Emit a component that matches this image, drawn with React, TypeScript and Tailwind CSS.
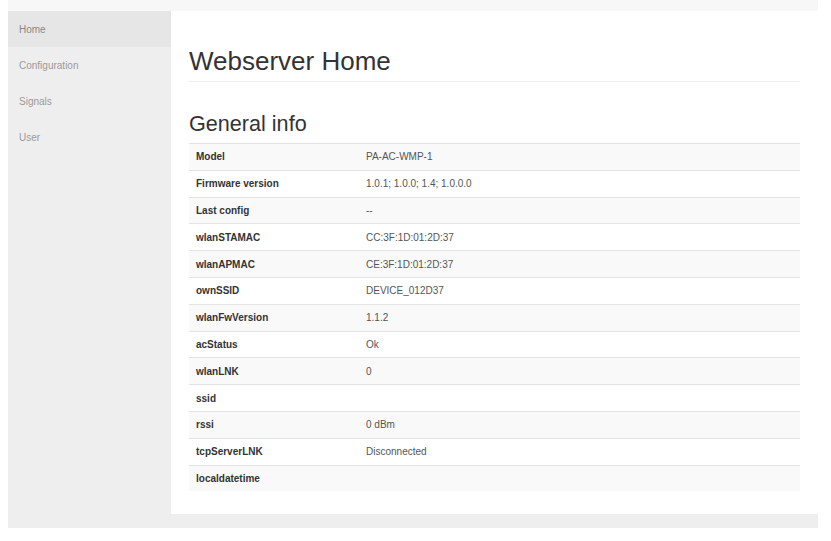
import React from "react";

const rows: [string, string][] = [
  ["Model", "PA-AC-WMP-1"],
  ["Firmware version", "1.0.1; 1.0.0; 1.4; 1.0.0.0"],
  ["Last config", "--"],
  ["wlanSTAMAC", "CC:3F:1D:01:2D:37"],
  ["wlanAPMAC", "CE:3F:1D:01:2D:37"],
  ["ownSSID", "DEVICE_012D37"],
  ["wlanFwVersion", "1.1.2"],
  ["acStatus", "Ok"],
  ["wlanLNK", "0"],
  ["ssid", ""],
  ["rssi", "0 dBm"],
  ["tcpServerLNK", "Disconnected"],
  ["localdatetime", ""],
];

const nav = ["Home", "Configuration", "Signals", "User"];

export default function App() {
  return (
    <div
      className="w-[831px] h-[541px] bg-white overflow-hidden"
      style={{ fontFamily: '"Liberation Sans", Arial, sans-serif' }}
    >
      <div className="ml-[8px] w-[810px]">
        <div className="h-[11px] bg-[#f7f7f7]" />
        <div className="flex bg-[#eeeeee]">
          <div className="w-[163px] shrink-0 flex flex-col">
            {nav.map((n, i) => (
              <div
                key={n}
                className={`h-[36px] flex items-center pl-[11px] text-[10px] ${
                  i === 0 ? "bg-[#e6e6e6] text-[#888888]" : "text-[#9a9a9a]"
                }`}
              >
                {n}
              </div>
            ))}
          </div>
          <div className="flex-1 bg-white px-[18px] pt-[36px] pb-[23px] text-[#333333]">
            <h1 className="text-[26px] leading-[28px] font-normal pb-[6px] border-b border-[#eeeeee]">
              Webserver Home
            </h1>
            <h2 className="mt-[30px] text-[21.6px] leading-[24px] font-normal mb-[7px]">
              General info
            </h2>
            <div className="flex flex-col">
              {rows.map(([k, v], i) => (
                <div
                  key={k}
                  className={`h-[26.8px] flex items-center border-t border-[#e4e4e4] text-[10px] ${
                    i % 2 === 0 ? "bg-[#f9f9f9]" : ""
                  }`}
                >
                  <div className="w-[170px] pl-[7px] font-bold text-[#333333]">{k}</div>
                  <div className="pl-[7px] text-[#555555]">{v}</div>
                </div>
              ))}
            </div>
          </div>
        </div>
        <div className="h-[14px] bg-[#eeeeee]" />
      </div>
    </div>
  );
}
